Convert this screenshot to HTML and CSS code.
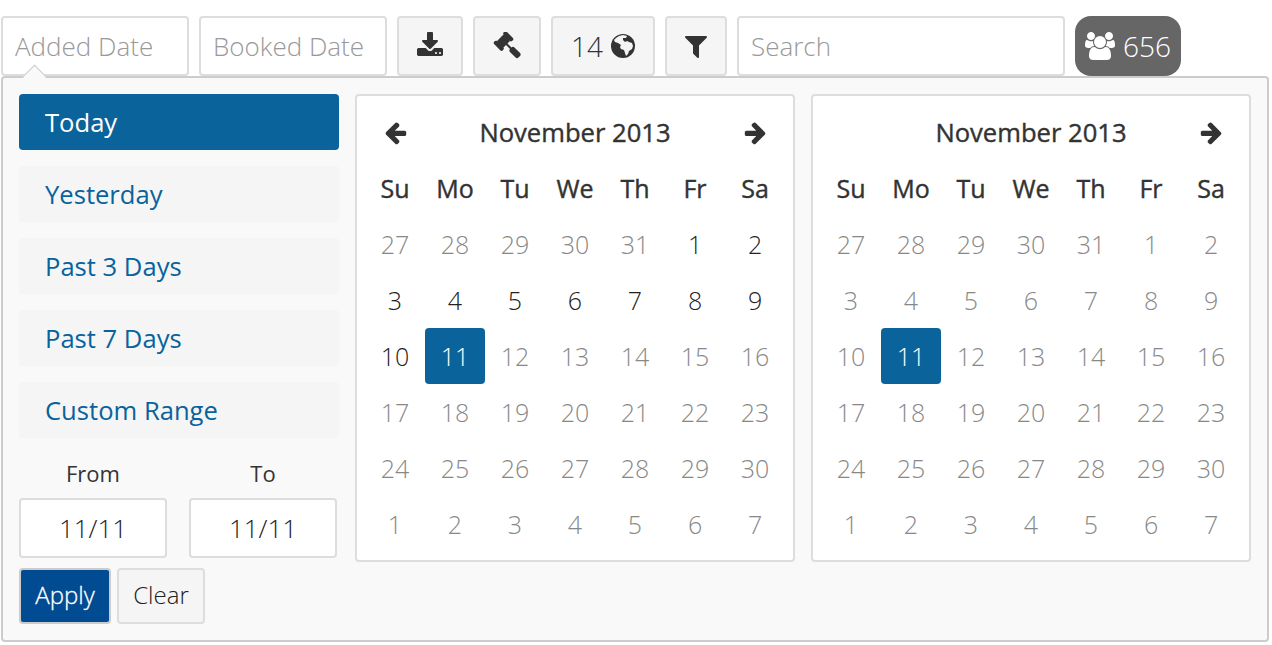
FILE: index.html
```html
<!DOCTYPE html>
<html>
<head>
    <title>Date filter</title>
    <link rel="stylesheet" href="styles.css">
</head>
<body>
    <div class="toolbar">
        <input class="field date-field" type="text" placeholder="Added Date">
        <input class="field date-field" type="text" placeholder="Booked Date">
        <button class="tool tool-download">
            <svg class="icon" viewBox="0 0 1792 1792"><path d="M1344 1344q0-26-19-45t-45-19-45 19-19 45 19 45 45 19 45-19 19-45zm256 0q0-26-19-45t-45-19-45 19-19 45 19 45 45 19 45-19 19-45zm128-224v320q0 40-28 68t-68 28h-1472q-40 0-68-28t-28-68v-320q0-40 28-68t68-28h465l135 136q58 56 136 56t136-56l136-136h464q40 0 68 28t28 68zm-325-569q17 41-14 70l-448 448q-18 19-45 19t-45-19l-448-448q-31-29-14-70 17-39 59-39h256v-448q0-26 19-45t45-19h256q26 0 45 19t19 45v448h256q42 0 59 39z"/></svg>
        </button>
        <button class="tool tool-gavel">
            <svg class="icon" viewBox="0 0 1792 1792"><path d="M1771 1440q0 53-37 90l-107 108q-39 37-91 37-53 0-90-37l-363-364q-38-36-38-90 0-53 43-96l-256-256-126 126q-14 14-34 14t-34-14q2 2 12.5 12t12.5 13 10 11.5 10 13.5 6 13.5 5.5 16.5 1.5 18q0 38-28 68-3 3-16.5 18t-19 20.5-18.5 16.5-22 15.5-22 9-26 4.5q-40 0-68-28l-408-408q-28-28-28-68 0-13 4.5-26t9-22 15.5-22 16.5-18.5 20.5-19 18-16.5q30-28 68-28 10 0 18 1.5t16.5 5.5 13.5 6 13.5 10 11.5 10 13 12.5 12 12.5q-14-14-14-34t14-34l348-348q14-14 34-14t34 14q-2-2-12.5-12t-12.5-13-10-11.5-10-13.5-6-13.5-5.5-16.5-1.5-18q0-38 28-68 3-3 16.5-18t19-20.5 18.5-16.5 22-15.5 22-9 26-4.5q40 0 68 28l408 408q28 28 28 68 0 13-4.5 26t-9 22-15.5 22-16.5 18.5-20.5 19-18 16.5q-30 28-68 28-10 0-18-1.5t-16.5-5.5-13.5-6-13.5-10-11.5-10-13-12.5-12-12.5q14 14 14 34t-14 34l-126 126 256 256q43-43 96-43 52 0 91 37l363 363q37 39 37 91z"/></svg>
        </button>
        <button class="tool tool-count">
            14
            <svg class="globe" viewBox="0 0 24 24">
                <circle cx="12" cy="12" r="12"/>
                <path class="land" d="M5 4l3-2 4-1 4 1-1 2-3 0 0 2 2 2 2-1 2 1 3 1 1 3-1 3-3 2-1 3-2 2-1-3-1-3-3-1-1-2 1-2-3-2-3-1-1-2z"/>
            </svg>
        </button>
        <button class="tool tool-filter">
            <svg class="icon" viewBox="0 0 1792 1792"><path d="M1595 295q17 41-14 70l-493 493v742q0 42-39 59-13 5-25 5-27 0-45-19l-256-256q-19-19-19-45v-486l-493-493q-31-29-14-70 17-39 59-39h1280q42 0 59 39z"/></svg>
        </button>
        <input class="field search-field" type="text" placeholder="Search">
        <div class="badge">
            <svg class="users" viewBox="0 0 1920 1792"><path d="M593 896q-162 5-265 128h-134q-82 0-138-40.5t-56-118.5q0-353 124-353 6 0 43.5 21t97.5 42.5 119 21.5q67 0 133-23-5 37-5 66 0 139 81 256zm1071 637q0 120-73 189.5t-194 69.5h-874q-121 0-194-69.5t-73-189.5q0-53 3.5-103.5t14-109 26.5-108.5 43-97.5 62-81 85.5-53.5 111.5-20q10 0 43 21.5t73 48 107 48 135 21.5 135-21.5 107-48 73-48 43-21.5q61 0 111.5 20t85.5 53.5 62 81 43 97.5 26.5 108.5 14 109 3.5 103.5zm-1024-1277q0 106-75 181t-181 75-181-75-75-181 75-181 181-75 181 75 75 181zm704 384q0 159-112.5 271.5t-271.5 112.5-271.5-112.5-112.5-271.5 112.5-271.5 271.5-112.5 271.5 112.5 112.5 271.5zm576 225q0 78-56 118.5t-138 40.5h-134q-103-123-265-128 81-117 81-256 0-29-5-66 66 23 133 23 59 0 119-21.5t97.5-42.5 43.5-21q124 0 124 353zm-128-609q0 106-75 181t-181 75-181-75-75-181 75-181 181-75 181 75 75 181z"/></svg>
            656
        </div>
    </div>

    <div class="popup">
        <div class="caret"></div>
        <div class="ranges">
            <div class="range active">Today</div>
            <div class="range">Yesterday</div>
            <div class="range">Past 3 Days</div>
            <div class="range">Past 7 Days</div>
            <div class="range">Custom Range</div>
            <div class="range-inputs">
                <label class="range-input">From<input type="text" value="11/11"></label>
                <label class="range-input">To<input type="text" value="11/11"></label>
            </div>
            <div class="range-buttons">
                <button class="btn-apply">Apply</button>
                <button class="btn-clear">Clear</button>
            </div>
        </div>
        <div class="calendar" id="cal-left"></div>
        <div class="calendar" id="cal-right"></div>
    </div>

    <script>
        const arrowLeft = '<svg class="arrow" viewBox="0 0 1792 1792"><path d="M1664 896v128q0 53-32.5 90.5t-84.5 37.5h-704l293 294q38 36 38 90t-38 90l-75 76q-37 37-90 37-52 0-91-37l-651-652q-37-37-37-90 0-52 37-91l651-650q38-38 91-38 52 0 90 38l75 74q38 38 38 91t-38 91l-293 293h704q52 0 84.5 37.5t32.5 90.5z"/></svg>';
        const arrowRight = '<svg class="arrow" viewBox="0 0 1792 1792"><path d="M1600 960q0 54-37 91l-651 651q-39 37-91 37-51 0-90-37l-75-75q-38-38-38-91t38-91l293-293h-704q-52 0-84.5-37.5t-32.5-90.5v-128q0-53 32.5-90.5t84.5-37.5h704l-293-294q-38-36-38-90t38-90l75-75q38-38 90-38 53 0 91 38l651 651q37 35 37 90z"/></svg>';
        const dow = ['Su', 'Mo', 'Tu', 'We', 'Th', 'Fr', 'Sa'];

        function buildCalendar(el, showPrev, enableMonth) {
            let html = '<table><colgroup>' + '<col class="day-col">'.repeat(7) + '</colgroup><tr>';
            html += '<th>' + (showPrev ? arrowLeft : '') + '</th>';
            html += '<th colspan="5" class="month">November 2013</th>';
            html += '<th>' + arrowRight + '</th></tr><tr>';
            dow.forEach((d) => { html += '<th class="dow">' + d + '</th>'; });
            html += '</tr>';

            // 27 Oct 2013 was the sunday of the first row
            const days = [27, 28, 29, 30, 31];
            for (let i = 1; i <= 30; i++) days.push(i);
            for (let i = 1; i <= 7; i++) days.push(i);

            days.forEach((day, i) => {
                if (i % 7 === 0) html += '<tr>';
                const inMonth = i >= 5 && i < 35;
                let cls = 'day off';
                if (inMonth && day === 11) cls = 'day today';
                else if (enableMonth && inMonth && day < 11) cls = 'day';
                html += '<td class="' + cls + '">' + day + '</td>';
                if (i % 7 === 6) html += '</tr>';
            });
            el.innerHTML = html + '</table>';
        }

        buildCalendar(document.getElementById('cal-left'), true, true);
        buildCalendar(document.getElementById('cal-right'), false, false);
    </script>
</body>
</html>
```

FILE: styles.css
```css
* { margin: 0; padding: 0; box-sizing: border-box; }
body { font-family: 'Open Sans', sans-serif; background: #fff; color: #333; font-size: 24px; overflow: hidden; }

.toolbar { display: flex; gap: 10px; padding: 16px 0 0 1px; height: 76px; align-items: flex-start; }
.field { height: 60px; border: 2px solid #ddd; border-radius: 4px; background: #fff; font-family: inherit; font-size: 26px; font-weight: 300; padding: 0 12px; color: #333; }
.field::placeholder { color: #999; opacity: 1; }
.date-field { width: 188px; }
.search-field { width: 328px; }
.tool { height: 60px; border: 2px solid #ddd; border-radius: 4px; background: #f5f5f5; color: #333; font-family: inherit; font-size: 28px; font-weight: 300; display: flex; align-items: center; justify-content: center; gap: 8px; }
.tool-download { width: 66px; }
.tool-gavel { width: 68px; }
.tool-count { width: 104px; }
.tool-filter { width: 62px; }
.icon { width: 28px; height: 28px; fill: #333; }
.globe { width: 24px; height: 24px; fill: #333; }
.globe .land { fill: #f5f5f5; }
.badge { width: 106px; height: 60px; border-radius: 16px; background: #666; color: #fff; font-size: 28px; font-weight: 300; display: flex; align-items: center; justify-content: center; gap: 8px; }
.users { width: 30px; height: 28px; fill: #fff; }

.popup { position: relative; display: flex; gap: 16px; margin-left: 1px; width: 1268px; height: 566px; padding: 16px; background: #f9f9f9; border: 2px solid #ccc; border-radius: 4px; }
.caret { position: absolute; left: 23px; top: -10px; width: 17px; height: 17px; background: #f9f9f9; border-left: 1px solid #ccc; border-top: 1px solid #ccc; transform: rotate(45deg); }

.ranges { width: 320px; flex-shrink: 0; }
.range { height: 56px; margin-bottom: 16px; padding-left: 26px; line-height: 58px; font-size: 25.6px; color: #08639c; background: #f5f5f5; border-radius: 4px; }
.range.active { background: #0b639c; color: #fff; }
.range-inputs { display: flex; gap: 22px; padding-top: 4px; }
.range-input { width: 148px; display: block; text-align: center; font-size: 22px; line-height: 30px; color: #333; }
.range-input input { display: block; width: 148px; height: 60px; margin-top: 10px; border: 2px solid #ddd; border-radius: 4px; background: #fff; font-family: inherit; font-size: 26px; font-weight: 300; text-align: center; color: #222; }
.range-buttons { display: flex; gap: 6px; margin-top: 10px; }
.btn-apply, .btn-clear { height: 56px; padding-bottom: 3px; font-family: inherit; font-size: 24px; font-weight: 300; border-radius: 4px; }
.btn-apply { width: 92px; color: #fff; background: #004b91; border: 2px solid #ccc; -webkit-text-stroke: 0.3px #fff; }
.btn-clear { width: 88px; color: #222; background: #f5f5f5; border: 2px solid #ddd; }

.calendar { width: 440px; height: 468px; padding: 8px; background: #fff; border: 2px solid #ddd; border-radius: 4px; }
.calendar table { border-collapse: collapse; table-layout: fixed; width: 420px; }
.day-col { width: 60px; }
.calendar th, .calendar td { height: 56px; text-align: center; vertical-align: middle; font-size: 25px; padding: 0; }
.calendar th { font-weight: 400; color: #333; white-space: nowrap; -webkit-text-stroke: 0.4px #333; }
.calendar th.month { font-size: 25.6px; }
.arrow { width: 25px; height: 25px; fill: #333; display: block; margin: 0 auto; }
.day { color: #222; font-weight: 300; }
.day.off { color: #888; }
.day.today { background: #0b639c; color: #fff; border-radius: 4px; }
```
